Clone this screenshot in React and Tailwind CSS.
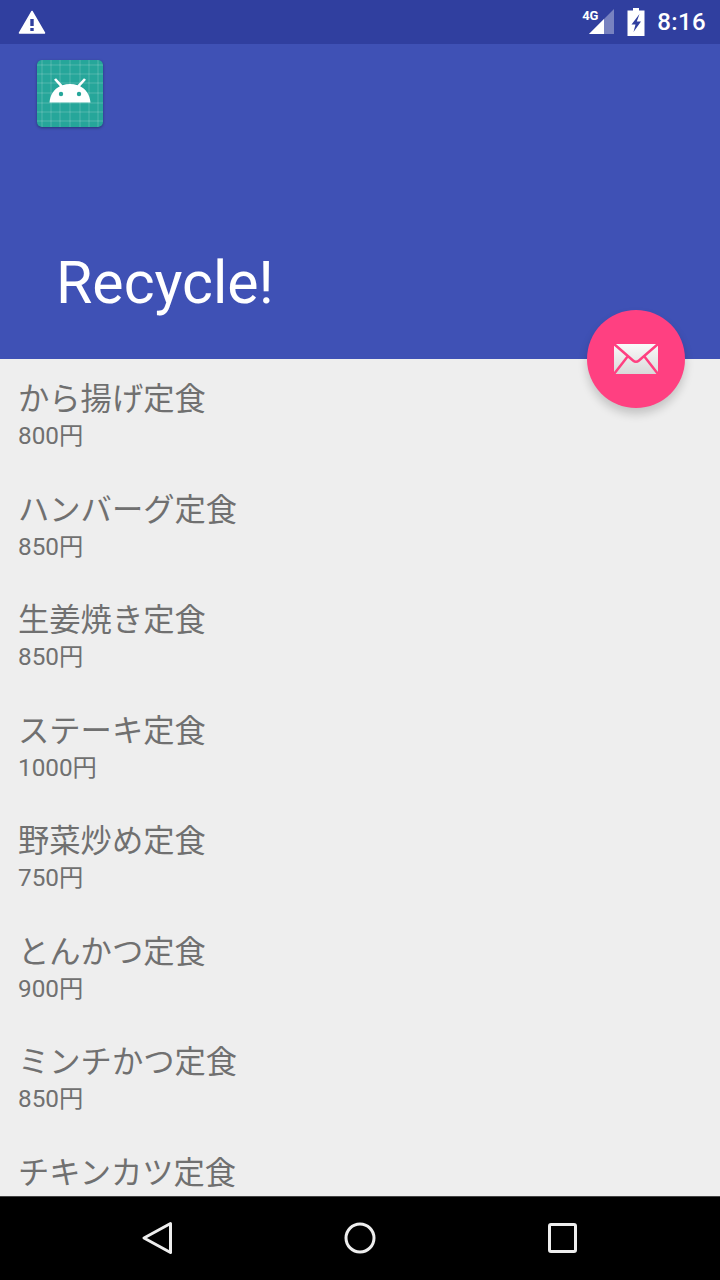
const items = [
  ["から揚げ定食", "800円"],
  ["ハンバーグ定食", "850円"],
  ["生姜焼き定食", "850円"],
  ["ステーキ定食", "1000円"],
  ["野菜炒め定食", "750円"],
  ["とんかつ定食", "900円"],
  ["ミンチかつ定食", "850円"],
  ["チキンカツ定食", null],
];

const font = { fontFamily: 'Roboto, "Noto Sans CJK JP", sans-serif' };

function AppIcon() {
  return (
    <div className="relative w-[66px] h-[67px] rounded-[5px] bg-[#26a69a] overflow-hidden shadow-[0_1px_3px_rgba(0,0,0,0.35)]">
      <svg width="66" height="67" viewBox="0 0 66 67" className="block">
        <g stroke="#ffffff" strokeOpacity="0.2" strokeWidth="1">
          {[5, 14, 23, 33, 43, 52, 61].map((v) => (
            <g key={v}>
              <line x1={v} y1="0" x2={v} y2="67" />
              <line x1="0" y1={v} x2="66" y2={v} />
            </g>
          ))}
        </g>
        <path d="M12.500 42.500c.6-8 4.800-13.500 10.400-16.300L17 19.800l2-1.500 6.500 7c4.700-1.700 10.300-1.700 15 0l6.500-7 2 1.500-5.900 6.400c5.600 2.800 9.800 8.300 10.400 16.300z" fill="#fff" />
        <circle cx="24" cy="34" r="2.200" fill="#26a69a" />
        <circle cx="42" cy="34" r="2.200" fill="#26a69a" />
      </svg>
    </div>
  );
}

function StatusBar() {
  return (
    <div className="h-[44px] bg-[#303f9f] flex items-center justify-between pl-[18px] pr-[14px] shrink-0">
      <svg width="28" height="24" viewBox="0 0 28 24">
        <path d="M14 1.500 26.500 23H1.500z" fill="#fff" stroke="#fff" strokeWidth="1.500" strokeLinejoin="round" />
        <rect x="12.300" y="9" width="3.400" height="7" fill="#303f9f" />
        <rect x="12.300" y="18" width="3.400" height="3" fill="#303f9f" />
      </svg>
      <div className="flex items-center">
        <div className="relative w-[32px] h-[26px] mr-[12px] ml-[-2px] mt-[-1px]">
          <svg width="32" height="26" viewBox="0 0 32 26" className="absolute left-0 top-0">
            <path d="M6 25 31 0V25z" fill="#fff" fillOpacity="0.35" />
            <path d="M6 25 21 10V25z" fill="#fff" />
          </svg>
          <span className="absolute left-[-1px] top-[0px] text-[13px] leading-[14px] font-bold text-white" style={font}>4G</span>
        </div>
        <svg width="18" height="28" viewBox="0 0 18 28" className="mr-[12px]">
          <path d="M6 0h6v2.500h5.500V28H.500V2.500H6z" fill="#fff" />
          <path d="M12.500 6 4.500 16.500h4L6.500 24 14 13.500H9.800z" fill="#303f9f" />
        </svg>
        <span className="text-white text-[24px] leading-[28px] font-medium tracking-[0.4px]" style={font}>8:16</span>
      </div>
    </div>
  );
}

function Fab() {
  return (
    <div className="absolute left-[587px] top-[310px] w-[98px] h-[98px] rounded-full bg-[#ff4081] flex items-center justify-center shadow-[0_6px_10px_rgba(0,0,0,0.18)]">
      <svg width="46" height="32" viewBox="0 0 46 32">
        <defs>
          <linearGradient id="m" x1="0" y1="0" x2="0" y2="1">
            <stop offset="0" stopColor="#fafafa" />
            <stop offset="1" stopColor="#d9d9d9" />
          </linearGradient>
        </defs>
        <rect x="1" y="1" width="44" height="30" rx="1" fill="url(#m)" />
        <path d="M1 1 20 17.500Q23 20 26 17.500L45 1M1 31 15 13M45 31 31 13" fill="none" stroke="#ff4081" strokeWidth="2.500" />
      </svg>
    </div>
  );
}

function NavBar() {
  return (
    <div className="h-[84px] bg-black border-t border-[#444] flex items-center justify-center shrink-0 relative">
      <div className="flex items-center gap-[171px] mt-[-1px]">
        <svg width="32" height="34" viewBox="0 0 32 34">
          <path d="M29.500 2.500 3 17l26.500 14.500z" fill="none" stroke="#eee" strokeWidth="3" strokeLinejoin="round" />
        </svg>
        <svg width="32" height="32" viewBox="0 0 32 32">
          <circle cx="16" cy="16" r="14" fill="none" stroke="#eee" strokeWidth="3" />
        </svg>
        <svg width="32" height="30" viewBox="0 0 32 30">
          <rect x="2.500" y="1.500" width="26" height="27" rx="1.500" fill="none" stroke="#eee" strokeWidth="3" />
        </svg>
      </div>
    </div>
  );
}

export default function App() {
  return (
    <div className="relative w-[720px] h-[1280px] overflow-hidden flex flex-col bg-[#eeeeee]" style={font}>
      <StatusBar />
      <div className="h-[315px] bg-[#3f51b5] shrink-0 flex flex-col justify-between pt-[16px] pl-[37px]">
        <AppIcon />
        <div className="pl-[19px] pb-[43px] text-white text-[59px] leading-[66px]">Recycle!</div>
      </div>
      <div className="flex-1 min-h-0 overflow-hidden pt-[22px] pl-[18px] text-[#707070]">
        {items.map(([name, price]) => (
          <div key={name} className="h-[110.500px]">
            <div className="text-[31.300px] leading-[38px]">{name}</div>
            {price && <div className="text-[24.300px] leading-[28px] mt-[3px]">{price}</div>}
          </div>
        ))}
      </div>
      <NavBar />
      <Fab />
    </div>
  );
}
